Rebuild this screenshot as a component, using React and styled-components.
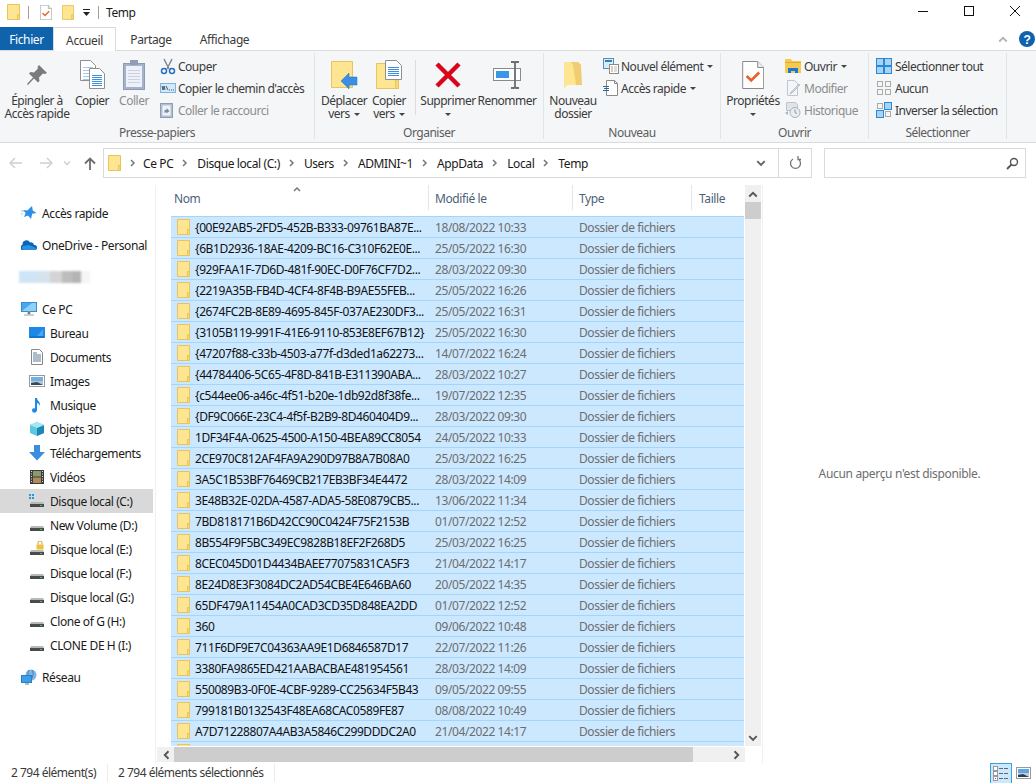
import React from 'react'
import styled, { createGlobalStyle } from 'styled-components'

const GlobalStyle = createGlobalStyle`
  html, body {
    margin: 0;
    padding: 0;
    background: #fff;
    overflow: hidden;
  }
  body, button {
    font-family: "Noto Sans", "Open Sans", "Liberation Sans", sans-serif;
    font-size: 12px;
    letter-spacing: -0.4px;
    color: #1e1e1e;
  }
`

const Window = styled.div`
  width: 1036px;
  height: 783px;
  display: flex;
  flex-direction: column;
  overflow: hidden;
`

/* title bar */
const TitleBar = styled.div`
  height: 27px;
  box-sizing: border-box;
  padding: 0 0 3px 7px;
  display: flex;
  align-items: center;
  flex: none;
`
const TitleSep = styled.div`
  width: 1px;
  height: 13px;
  background: #a0a0a0;
  margin: 0 ${p => p.$right || 8}px 0 ${p => p.$left || 8}px;
`
const TitleText = styled.span`
  color: #1a1a1a;
`
const QuickIcon = styled.span`
  display: flex;
  margin-right: ${p => p.$right || 0}px;
`
const WindowButtons = styled.div`
  margin-left: auto;
  margin-right: -2px;
  display: flex;
  align-self: flex-start;
`
const WindowButton = styled.div`
  width: 46px;
  height: 22px;
  display: flex;
  align-items: center;
  justify-content: center;
`

/* tabs */
const TabBar = styled.div`
  height: 23px;
  display: flex;
  flex: none;
  position: relative;
  border-bottom: 1px solid #dadbdc;
`
const FileTab = styled.div`
  width: 53px;
  height: 23px;
  box-sizing: border-box;
  padding-top: 1px;
  background: #0f62ac;
  color: #fff;
  display: flex;
  align-items: center;
  justify-content: center;
`
const Tab = styled.div`
  width: ${p => p.$w}px;
  height: ${p => (p.$active ? 24 : 23)}px;
  box-sizing: border-box;
  padding-top: 1px;
  display: flex;
  align-items: center;
  justify-content: center;
  color: #3a3a3a;
  background: #fff;
  ${p => p.$active && 'border: 1px solid #dadbdc; border-bottom: none; z-index: 1;'}
`
const TabTools = styled.div`
  margin-left: auto;
  display: flex;
  align-items: center;
  gap: 11px;
  padding-right: 1px;
`

/* ribbon */
const Ribbon = styled.div`
  height: 91px;
  flex: none;
  display: flex;
  background: #f5f6f7;
  border-bottom: 1px solid #dadbdc;
  letter-spacing: -0.5px;
`
const Group = styled.div`
  width: ${p => p.$w}px;
  box-sizing: border-box;
  display: flex;
  flex-direction: column;
  margin: 2px 0 3px;
  padding: 2px 0 0 ${p => p.$pad || 0}px;
  border-right: 1px solid #e2e3e4;
`
const GroupBody = styled.div`
  display: flex;
  flex: none;
  height: 69px;
`
const GroupLabel = styled.div`
  margin-top: 2px;
  margin-left: -${p => p.$pad || 0}px;
  text-align: center;
  color: #5c5c5c;
  line-height: 14px;
`
const LargeButton = styled.div`
  width: ${p => p.$w}px;
  flex: none;
  display: flex;
  flex-direction: column;
  align-items: center;
  color: ${p => (p.$off ? '#8d8d8d' : '#3a3a3a')};
`
const LargeIcon = styled.div`
  height: 39px;
  display: flex;
  align-items: center;
  justify-content: center;
`
const LargeLabel = styled.div`
  line-height: 13px;
  text-align: center;
  white-space: nowrap;
`
const Caret = styled.span`
  display: inline-block;
  width: 0;
  height: 0;
  border-left: 3.5px solid transparent;
  border-right: 3.5px solid transparent;
  border-top: 3.5px solid #444;
  margin-left: ${p => p.$left ?? 4}px;
  vertical-align: 2px;
`
const RibbonSep = styled.div`
  width: 1px;
  height: 55px;
  margin: 5px 4px 0;
  background: #dcdcdc;
`
const SmallColumn = styled.div`
  display: flex;
  flex-direction: column;
  margin-left: ${p => p.$left || 0}px;
`
const SmallButton = styled.div`
  height: 22px;
  display: flex;
  align-items: center;
  gap: ${p => p.$gap ?? 3}px;
  white-space: nowrap;
  color: ${p => (p.$off ? '#8d8d8d' : '#3a3a3a')};
`

/* navigation */
const NavBar = styled.div`
  height: 42px;
  flex: none;
  display: flex;
  align-items: flex-start;
  padding-top: 5px;
  box-sizing: border-box;
`
const NavArrows = styled.div`
  width: 103px;
  height: 30px;
  display: flex;
  align-items: center;
  flex: none;
`
const NavArrow = styled.span`
  display: flex;
  margin-left: ${p => p.$left}px;
`
const AddressBar = styled.div`
  width: 709px;
  height: 30px;
  box-sizing: border-box;
  border: 1px solid #d9d9d9;
  display: flex;
  align-items: center;
  padding-left: 4px;
  color: #1a1a1a;
`
const Crumb = styled.span`
  display: flex;
  align-items: center;
  white-space: nowrap;
`
const CrumbArrow = styled.span`
  display: flex;
  margin: 0 ${p => p.$right ?? 8}px 0 ${p => p.$left ?? 8}px;
`
const AddressEnd = styled.div`
  margin-left: auto;
  display: flex;
  align-items: center;
  height: 100%;
`
const DropZone = styled.div`
  width: 34px;
  display: flex;
  justify-content: center;
`
const RefreshBox = styled.div`
  width: 32px;
  height: 100%;
  border-left: 1px solid #d9d9d9;
  display: flex;
  align-items: center;
  justify-content: center;
`
const SearchBox = styled.div`
  width: 202px;
  height: 30px;
  margin-left: 12px;
  box-sizing: border-box;
  border: 1px solid #d9d9d9;
  display: flex;
  align-items: center;
  justify-content: flex-end;
  padding-right: 6px;
`

/* main */
const Main = styled.div`
  flex: 1;
  min-height: 0;
  display: flex;
`
const Sidebar = styled.div`
  width: 156px;
  flex: none;
  box-sizing: border-box;
  border-right: 1px solid #f0f0f0;
  padding-top: 16px;
`
const NavRow = styled.div`
  width: 153px;
  height: 24px;
  display: flex;
  align-items: center;
  gap: 5px;
  padding-left: ${p => (p.$child ? 29 : 21)}px;
  margin-top: ${p => (p.$gap ? 8 : 0)}px;
  box-sizing: border-box;
  background: ${p => (p.$active ? '#d9d9d9' : 'transparent')};
  white-space: nowrap;
  color: #1a1a1a;
`
const NavIcon = styled.span`
  width: 16px;
  height: 16px;
  flex: none;
  display: flex;
`
const BlurredRow = styled.div`
  height: 24px;
  margin-top: 8px;
  display: flex;
  align-items: center;
  padding-left: 19px;
`
const BlurredName = styled.div`
  width: 71px;
  height: 12px;
  filter: blur(0.8px);
  background: linear-gradient(90deg, #cfe4f6 0 26%, #d6e3ec 26% 44%, #d4d4d4 44% 60%, #bdbdbd 60% 75%, #b4b4b4 75% 88%, #f5f5f5 88%);
`

const ListArea = styled.div`
  width: 607px;
  flex: none;
  box-sizing: border-box;
  padding-left: 1px;
  border-right: 1px solid #f0f0f0;
  display: grid;
  grid-template-columns: 588px 16px;
  grid-template-rows: 561px 16px;
`
const ListPane = styled.div`
  overflow: hidden;
  padding-left: 14px;
`
const Columns = styled.div`
  display: grid;
  grid-template-columns: 258px 144px 119px 52px;
`
const Header = styled(Columns)`
  height: 31px;
`
const HeaderCell = styled.div`
  height: 25px;
  position: relative;
  box-sizing: border-box;
  padding: 2px 0 0 ${p => p.$pad || 6}px;
  display: flex;
  align-items: center;
  color: #4d5f78;
  border-right: ${p => (p.$noLine ? 'none' : '1px solid #e5e5e5')};
`
const SortMark = styled.span`
  position: absolute;
  top: 0;
  left: 122px;
  display: flex;
`
const Row = styled(Columns)`
  width: 573px;
  height: 21px;
  box-sizing: border-box;
  align-items: center;
  background: #cce8ff;
  border-bottom: 1px solid #a3d5fd;
  &:nth-child(2) {
    height: 22px;
    border-top: 1px solid #a3d5fd;
  }
`
const NameCell = styled.div`
  display: flex;
  align-items: center;
  gap: 5px;
  padding-left: 6px;
  white-space: nowrap;
  overflow: hidden;
  color: #111;
`
const InfoCell = styled.div`
  padding-left: 6px;
  white-space: nowrap;
  color: #6d6d6d;
`
const ScrollV = styled.div`
  background: #f0f0f0;
  display: flex;
  flex-direction: column;
`
const ScrollH = styled.div`
  background: #f0f0f0;
  display: flex;
  margin-top: 1px;
`
const ScrollEnd = styled.div`
  height: ${p => (p.$h ? '17px' : 'auto')};
  width: ${p => (p.$h ? 'auto' : '17px')};
  flex: none;
  display: flex;
  align-items: center;
  justify-content: center;
`
const ThumbV = styled.div`
  height: 17px;
  background: #cdcdcd;
`
const ThumbH = styled.div`
  width: 519px;
  background: #cdcdcd;
`
const Spacer = styled.div`
  flex: 1;
`
const Preview = styled.div`
  flex: 1;
  display: flex;
  align-items: center;
  justify-content: center;
  padding-bottom: 1px;
  color: #6d6d6d;
  letter-spacing: -0.33px;
`

/* status */
const StatusBar = styled.div`
  height: 20px;
  flex: none;
  display: flex;
  align-items: center;
  color: #3a3a3a;
  letter-spacing: -0.5px;
`
const StatusItem = styled.div`
  width: ${p => p.$w}px;
  box-sizing: border-box;
  padding-left: ${p => p.$pad}px;
  white-space: nowrap;
  border-right: 1px solid #ececec;
  line-height: 18px;
`
const ViewButtons = styled.div`
  margin-left: auto;
  margin-right: 2px;
  display: flex;
  align-items: center;
  height: 100%;
`
const ViewButton = styled.div`
  width: 22px;
  height: 20px;
  box-sizing: border-box;
  display: flex;
  align-items: center;
  justify-content: center;
  ${p => p.$active && 'background: #cce8ff; border: 1px solid #3aa0da; border-bottom: none;'}
`

/* drawings */
const Folder = ({ w = 13, h = 16 }) => (
  <svg width={w} height={h} viewBox="0 0 13 16">
    <path d="M.5.5h12v15H.5z" fill="#fde592" stroke="#e8c45c" />
    <path d="M10.5 10.5h2v5h-2z" fill="#fbd873" stroke="#e8c45c" />
  </svg>
)
const Chevron = ({ dir = 'right', c = '#777', s = 8 }) => {
  const d = { right: 'M2 1l3 3-3 3', left: 'M6 1L3 4l3 3', up: 'M1 6l3-3 3 3', down: 'M1 2.5l3 3 3-3' }[dir]
  return (
    <svg width={s} height={s} viewBox="0 0 8 8">
      <path d={d} fill="none" stroke={c} strokeWidth="1.5" />
    </svg>
  )
}
const PropsIcon = ({ s = 14 }) => (
  <svg width={s * 0.8} height={s} viewBox="0 0 22 28">
    <path d="M.5.5h15l6 6v21H.5z" fill="#fff" stroke="#8a8a8a" />
    <path d="M15.5.5v6h6" fill="#eee" stroke="#8a8a8a" />
    <path d="M4.5 15l4.5 4.5 8-8" fill="none" stroke="#e8622a" strokeWidth="2.6" />
  </svg>
)
const PinIcon = () => (
  <svg width="22" height="22" viewBox="0 0 22 22">
    <path d="M13 1l8 8-2 1-2-.5-4 4 .5 3.5-1.5 1.5-4-4L2 21l-1-1 6-6.500-4-4L4.500 8 8 8.500l4-4L11.500 3z" fill="#7b7b7b" />
  </svg>
)
const Doc = ({ x, y, w, h, lines, dense }) => (
  <g>
    <path d={`M${x + .5} ${y + .5}h${w - 6}l5 5v${h - 6}h-${w - 1}z`} fill="#fff" stroke="#8f8f8f" />
    {Array.from({ length: lines }).map((_, i) => (
      <path key={i} d={`M${x + 3} ${y + 7.5 + i * (dense ? 2 : 3)}h${w - 6}`} stroke={dense ? '#3f8fe0' : '#a5c8ea'} />
    ))}
  </g>
)
const CopyIcon = () => (
  <svg width="25" height="29" viewBox="0 0 25 29">
    <Doc x={0} y={0} w={16} h={21} lines={5} />
    <Doc x={9} y={8} w={16} h={21} lines={6} dense />
  </svg>
)
const ClipboardIcon = () => (
  <svg width="22" height="30" viewBox="0 0 22 30">
    <rect x=".5" y="3.500" width="21" height="26" fill="#a3b3cb" stroke="#8b9bb3" />
    <rect x="3" y="6" width="16" height="21" fill="#eef1f8" />
    <path d="M5 10.500h12M5 13.500h12M5 16.500h12M5 19.500h12M5 22.500h12" stroke="#c9d2e3" />
    <rect x="7" y="0" width="8" height="5" fill="#8f9db3" />
  </svg>
)
const ScissorsIcon = () => (
  <svg width="16" height="17" viewBox="0 0 16 17">
    <path d="M4 1l5 10M12 1L7 11" stroke="#7f8a96" strokeWidth="1.5" />
    <circle cx="4" cy="13" r="2.500" fill="none" stroke="#2a6fc0" strokeWidth="1.5" />
    <circle cx="12" cy="13" r="2.500" fill="none" stroke="#2a6fc0" strokeWidth="1.5" />
  </svg>
)
const PathIcon = () => (
  <svg width="16" height="10" viewBox="0 0 16 10">
    <rect x=".5" y=".5" width="15" height="9" fill="#d4e8f8" stroke="#7fb3dc" />
    <path d="M2 3l1 4 1-4 1 4M6 3l2 4M9 7h1M11 7h1M13 7h1" stroke="#3a5a78" fill="none" />
  </svg>
)
const ShortcutIcon = () => (
  <svg width="13" height="16" viewBox="0 0 13 16">
    <rect x=".5" y="1.500" width="12" height="14" fill="#b3c0d3" stroke="#8e9db2" />
    <rect x="2.500" y="3.500" width="8" height="10" fill="#f0f2f7" />
    <path d="M4.500 11V8h2V6l3 3-3 2.500V10" fill="#7b8aa0" />
  </svg>
)
const MoveIcon = () => (
  <svg width="27" height="30" viewBox="0 0 27 30">
    <path d="M.5 1.500h21v26H.5z" fill="#fde592" stroke="#e8c45c" />
    <path d="M18.500 18.500h3v9h-3z" fill="#fbd873" stroke="#e8c45c" />
    <path d="M10 21l8-8v4h8v8h-8v4z" fill="#3a8ee6" stroke="#2a72c0" strokeWidth=".5" />
  </svg>
)
const CopyToIcon = () => (
  <svg width="27" height="30" viewBox="0 0 27 30">
    <path d="M.5 3.500h22v25H.5z" fill="#fde592" stroke="#e8c45c" />
    <path d="M19.500 20h3v8.500h-3z" fill="#fbd873" stroke="#e8c45c" />
    <Doc x={9} y={0} w={17} h={20} lines={5} dense />
  </svg>
)
const DeleteIcon = () => (
  <svg width="26" height="26" viewBox="0 0 26 26">
    <path d="M2 2l22 22M24 2L2 24" stroke="#d8051b" strokeWidth="4.500" />
  </svg>
)
const RenameIcon = () => (
  <svg width="29" height="28" viewBox="0 0 29 28">
    <rect x=".5" y="7.500" width="27" height="12" fill="#fff" stroke="#8a8a8a" />
    <rect x="3" y="10" width="13" height="7" fill="#3a96e6" />
    <path d="M18 1h3l1 1 1-1h3M22 2v24M18 27h3l1-1 1 1h3" fill="none" stroke="#6d6d6d" strokeWidth="1.800" />
  </svg>
)
const NewFolderIcon = () => (
  <svg width="20" height="28" viewBox="0 0 20 28">
    <path d="M1 1h14l3 3v20H4L1 27z" fill="#fbdc86" />
    <path d="M8 1h7l3 3 1 20H9z" fill="#f0cd72" />
    <path d="M1 1h7l2 3 3 20H4L1 27z" fill="#fde592" />
  </svg>
)
const NewItemIcon = () => (
  <svg width="16" height="16" viewBox="0 0 16 16">
    <rect x=".5" y=".5" width="10" height="10" fill="#d8ecfa" stroke="#5a8fb5" />
    <path d="M2 3h7" stroke="#2f7fc0" strokeWidth="2" />
    <rect x="6.500" y="6.500" width="9" height="9" fill="#fff" stroke="#8a8a8a" />
    <path d="M8 9h2M8 11h2M8 13h2" stroke="#e08a4a" />
    <path d="M11 9h3M11 11h3M11 13h3" stroke="#bbb" />
  </svg>
)
const EasyAccessIcon = () => (
  <svg width="15" height="16" viewBox="0 0 15 16">
    <path d="M3.500.5h8l3 3v12h-11z" fill="#fff" stroke="#8a8a8a" />
    <path d="M11.500.5v3h3" fill="none" stroke="#8a8a8a" />
    <path d="M0 6.500h6M1 8.500h5M0 10.500h6" stroke="#2a6a9a" />
  </svg>
)
const OpenIcon = () => (
  <svg width="16" height="16" viewBox="0 0 16 16">
    <path d="M0 1h6l1 2h9v12H0z" fill="#f6c94f" />
    <path d="M0 4h16v1H0z" fill="#e6a92e" />
    <path d="M3 15v-5h10v5h-3v-2H6v2z" fill="#1a78d8" />
  </svg>
)
const EditIcon = () => (
  <svg width="16" height="16" viewBox="0 0 16 16">
    <path d="M2.500.5h7l3 3v12h-10z" fill="#f4f6f9" stroke="#c0c6d0" />
    <path d="M6 12l-1 2 2-1 8-8-1-1z" fill="#d0dae6" stroke="#a8b4c2" strokeWidth=".7" />
  </svg>
)
const HistoryIcon = () => (
  <svg width="16" height="16" viewBox="0 0 16 16">
    <path d="M1.500.5h9l2 2v6h-11z" fill="#dfe3ea" stroke="#bcc3cf" />
    <circle cx="10" cy="10.500" r="5" fill="#e9ecf1" stroke="#a9b0bb" />
    <path d="M10 7.500v3l2 1" fill="none" stroke="#8d96a3" />
    <path d="M0 11l3-2v4z" fill="#a9b5c5" />
  </svg>
)
const Quad = ({ on = [] }) => (
  <svg width="16" height="16" viewBox="0 0 16 16">
    {[[0, 0], [8, 0], [0, 8], [8, 8]].map(([x, y], i) => (
      <rect
        key={i}
        x={x + (on[i] ? .5 : 1.5)}
        y={y + (on[i] ? .5 : 1.5)}
        width={on[i] ? 7 : 5}
        height={on[i] ? 7 : 5}
        fill={on[i] ? '#a8d3f3' : 'none'}
        stroke={on[i] ? '#2b88d8' : '#aaa'}
      />
    ))}
  </svg>
)
const Star = () => (
  <svg width="16" height="16" viewBox="0 0 16 16">
    <path d="M11 1l.8 4.500L15.500 8l-4.300.8L10 14l-3-3.500L3 12l1.700-4L2 5l4.300.4z" fill="#2f8fe6" />
    <path d="M0 6h3M0 9h2" stroke="#9cc8ee" />
  </svg>
)
const Cloud = () => (
  <svg width="16" height="16" viewBox="0 0 16 16">
    <path d="M2 13a2.500 2.500 0 0 1-.5-5A4 4 0 0 1 9 5.500 3 3 0 0 1 13 8a2.500 2.500 0 0 1 1 5z" fill="#0a64b8" />
    <path d="M1 11.500a2 2 0 0 1 1-2.500l6-1 7 3a2 2 0 0 1-1 2H2z" fill="#2c90e0" />
  </svg>
)
const Monitor = () => (
  <svg width="16" height="16" viewBox="0 0 16 16">
    <rect x=".5" y="1.500" width="15" height="9" fill="#48a8ee" stroke="#3a8ecc" />
    <path d="M1 10l10-8h4v8z" fill="#8fd0f6" />
    <path d="M7 11h2v2H7zM3 14h10" stroke="#9aa3ad" />
  </svg>
)
const Desktop = () => (
  <svg width="16" height="16" viewBox="0 0 16 16">
    <rect x="0" y="2" width="16" height="11" fill="#1d88e8" />
    <path d="M1 12h14" stroke="#0f62ac" />
    <path d="M8 11l6-7v7z" fill="#4aa6f0" />
  </svg>
)
const DocsIcon = () => (
  <svg width="16" height="16" viewBox="0 0 16 16">
    <path d="M2.500.5h8l3 3v12h-11z" fill="#fff" stroke="#888" />
    <path d="M4 4h4M4 6h8M4 8h8M4 10h8M4 12h8" stroke="#5a7a96" />
  </svg>
)
const ImagesIcon = () => (
  <svg width="16" height="16" viewBox="0 0 16 16">
    <rect x=".5" y="2.500" width="15" height="11" fill="#fff" stroke="#999" />
    <rect x="2" y="4" width="12" height="4" fill="#6fb0e6" />
    <rect x="2" y="8" width="12" height="4" fill="#b8c4cc" />
    <path d="M2 10l6-1 6 3H2z" fill="#334a5c" />
  </svg>
)
const MusicIcon = () => (
  <svg width="16" height="16" viewBox="0 0 16 16">
    <path d="M6 1h2c0 3 4 4 3 8-.5-2-2-3-3-3v7c0 2-2 3-3.500 2.500S2.500 12 4 11.500c.8-.3 1.500-.2 2 .2z" fill="#1d88e8" />
  </svg>
)
const CubeIcon = () => (
  <svg width="16" height="16" viewBox="0 0 16 16">
    <path d="M8 1l7 3v8l-7 3-7-3V4z" fill="#5cc8e0" />
    <path d="M8 7l7-3v8l-7 3z" fill="#1d88b8" />
    <path d="M1 4l7-3 7 3-7 3z" fill="#a6e6f0" />
  </svg>
)
const DownIcon = () => (
  <svg width="16" height="16" viewBox="0 0 16 16">
    <path d="M5 0h6v7h5l-8 8.500L0 7h5z" fill="#3a8ee0" />
  </svg>
)
const VideoIcon = () => (
  <svg width="16" height="16" viewBox="0 0 16 16">
    <rect x="1" y="1" width="14" height="14" fill="#3c3c3c" />
    <path d="M2 2.500h1M2 5h1M2 7.500h1M2 10h1M2 12.500h1M13 2.500h1M13 5h1M13 7.500h1M13 10h1M13 12.500h1" stroke="#ddd" />
    <rect x="4" y="2" width="8" height="5.500" fill="#8a9a6a" />
    <rect x="4" y="8.500" width="8" height="5.500" fill="#b08a5a" />
  </svg>
)
const Drive = ({ lock, win }) => (
  <svg width="16" height="16" viewBox="0 0 16 16">
    {win && <path d="M0 1h2v2H0zM3 1h2v2H3zM0 4h2v2H0zM3 4h2v2H3z" fill="#1d9ae8" />}
    <path d="M2 9h12l1 2H1z" fill="#b8b8b8" />
    <rect x="1" y="11" width="14" height="3" fill="#4a4a4a" />
    <rect x="11" y="12" width="2" height="1" fill="#3ad04a" />
    {lock && (
      <g>
        <rect x="7.500" y="3.500" width="7" height="5" fill="#f0c040" />
        <path d="M9 3.500V2a2 2 0 0 1 4 0v1.500" fill="none" stroke="#c9a030" />
      </g>
    )}
  </svg>
)
const NetIcon = () => (
  <svg width="16" height="16" viewBox="0 0 16 16">
    <circle cx="10" cy="6" r="5.500" fill="#7fb6e6" />
    <path d="M8 1c-2 3-1 6 2 9M11 1c2 3 1 6-1 10" stroke="#4a7fb0" fill="none" />
    <rect x=".5" y="6.500" width="10" height="7" fill="#3aa0ee" stroke="#2a80c0" />
    <path d="M4 15h4" stroke="#777" />
  </svg>
)
const DetailsViewIcon = () => (
  <svg width="16" height="16" viewBox="0 0 16 16">
    <rect x=".5" y=".5" width="4" height="4" fill="#fff" stroke="#999" />
    <rect x=".5" y="5.500" width="4" height="4" fill="#fff" stroke="#999" />
    <rect x=".5" y="10.500" width="4" height="4" fill="#fff" stroke="#999" />
    <rect x="2" y="12" width="1" height="1" fill="#d0302a" />
    <path d="M6 2.500h4M11 2.500h4M6 7.500h4M11 7.500h4M6 12.500h4M11 12.500h4" stroke="#666" />
  </svg>
)
const ThumbViewIcon = () => (
  <svg width="15" height="12" viewBox="0 0 15 12">
    <rect x=".5" y=".5" width="14" height="11" fill="#fff" stroke="#999" />
    <rect x="2" y="2" width="11" height="4" fill="#5ea6ea" />
    <rect x="2" y="6" width="11" height="4" fill="#c4ccd4" />
    <path d="M2 8l5-1 6 3H2z" fill="#2c3e50" />
  </svg>
)

const ROWS = [
  ['{00E92AB5-2FD5-452B-B333-09761BA87E...', '18/08/2022 10:33'],
  ['{6B1D2936-18AE-4209-BC16-C310F62E0E...', '25/05/2022 16:30'],
  ['{929FAA1F-7D6D-481f-90EC-D0F76CF7D2...', '28/03/2022 09:30'],
  ['{2219A35B-FB4D-4CF4-8F4B-B9AE55FEB...', '25/05/2022 16:26'],
  ['{2674FC2B-8E89-4695-845F-037AE230DF3...', '25/05/2022 16:31'],
  ['{3105B119-991F-41E6-9110-853E8EF67B12}', '25/05/2022 16:30'],
  ['{47207f88-c33b-4503-a77f-d3ded1a62273...', '14/07/2022 16:24'],
  ['{44784406-5C65-4F8D-841B-E311390ABA...', '28/03/2022 10:27'],
  ['{c544ee06-a46c-4f51-b20e-1db92d8f38fe...', '19/07/2022 12:35'],
  ['{DF9C066E-23C4-4f5f-B2B9-8D460404D9...', '28/03/2022 09:30'],
  ['1DF34F4A-0625-4500-A150-4BEA89CC8054', '24/05/2022 10:33'],
  ['2CE970C812AF4FA9A290D97B8A7B08A0', '25/03/2022 16:25'],
  ['3A5C1B53BF76469CB217EB3BF34E4472', '28/03/2022 14:09'],
  ['3E48B32E-02DA-4587-ADA5-58E0879CB5...', '13/06/2022 11:34'],
  ['7BD818171B6D42CC90C0424F75F2153B', '01/07/2022 12:52'],
  ['8B554F9F5BC349EC9828B18EF2F268D5', '25/03/2022 16:25'],
  ['8CEC045D01D4434BAEE77075831CA5F3', '21/04/2022 14:17'],
  ['8E24D8E3F3084DC2AD54CBE4E646BA60', '20/05/2022 14:35'],
  ['65DF479A11454A0CAD3CD35D848EA2DD', '01/07/2022 12:52'],
  ['360', '09/06/2022 10:48'],
  ['711F6DF9E7C04363AA9E1D6846587D17', '22/07/2022 11:26'],
  ['3380FA9865ED421AABACBAE481954561', '28/03/2022 14:09'],
  ['550089B3-0F0E-4CBF-9289-CC25634F5B43', '09/05/2022 09:55'],
  ['799181B0132543F48EA68CAC0589FE87', '08/08/2022 10:49'],
  ['A7D71228807A4AB3A5846C299DDDC2A0', '21/04/2022 14:17'],
  ['', ''],
]

const PLACES = [
  ['Bureau', <Desktop />],
  ['Documents', <DocsIcon />],
  ['Images', <ImagesIcon />],
  ['Musique', <MusicIcon />],
  ['Objets 3D', <CubeIcon />],
  ['Téléchargements', <DownIcon />],
  ['Vidéos', <VideoIcon />],
  ['Disque local (C:)', <Drive win />, true],
  ['New Volume (D:)', <Drive />],
  ['Disque local (E:)', <Drive lock />],
  ['Disque local (F:)', <Drive />],
  ['Disque local (G:)', <Drive />],
  ['Clone of G (H:)', <Drive />],
  ['CLONE DE H (I:)', <Drive />],
]

const CRUMBS = ['Ce PC', 'Disque local (C:)', 'Users', 'ADMINI~1', 'AppData', 'Local', 'Temp']

export default function App () {
  return (
    <Window>
      <GlobalStyle />
      <TitleBar>
        <QuickIcon><Folder w={13} h={16} /></QuickIcon>
        <TitleSep $left={8} $right={11} />
        <QuickIcon $right={10}><PropsIcon s={15} /></QuickIcon>
        <QuickIcon $right={9}><Folder w={12} h={15} /></QuickIcon>
        <QuickIcon>
          <svg width="7" height="7" viewBox="0 0 7 7"><path d="M0 0h7v1H0zM0 3h7L3.500 7z" fill="#222" /></svg>
        </QuickIcon>
        <TitleSep $left={8} $right={7} />
        <TitleText>Temp</TitleText>
        <WindowButtons>
          <WindowButton>
            <svg width="10" height="10" viewBox="0 0 10 10"><path d="M0 5.500h10" stroke="#111" /></svg>
          </WindowButton>
          <WindowButton>
            <svg width="10" height="10" viewBox="0 0 10 10"><rect x=".5" y=".5" width="9" height="9" fill="none" stroke="#111" /></svg>
          </WindowButton>
          <WindowButton>
            <svg width="10" height="10" viewBox="0 0 10 10"><path d="M0 0l10 10M10 0L0 10" stroke="#111" /></svg>
          </WindowButton>
        </WindowButtons>
      </TitleBar>

      <TabBar>
        <FileTab>Fichier</FileTab>
        <Tab $w={63} $active>Accueil</Tab>
        <Tab $w={70}>Partage</Tab>
        <Tab $w={77}>Affichage</Tab>
        <TabTools>
          <Chevron dir="up" c="#b5b5b5" s={10} />
          <svg width="16" height="16" viewBox="0 0 16 16">
            <circle cx="8" cy="8" r="8" fill="#0f62ac" />
            <text x="8" y="12.500" textAnchor="middle" fontSize="12" fontWeight="700" fontFamily="Liberation Sans" fill="#fff">?</text>
          </svg>
        </TabTools>
      </TabBar>

      <Ribbon>
        <Group $w={315} $pad={3}>
          <GroupBody>
            <LargeButton $w={68}>
              <LargeIcon><PinIcon /></LargeIcon>
              <LargeLabel>Épingler à<br />Accès rapide</LargeLabel>
            </LargeButton>
            <LargeButton $w={42}>
              <LargeIcon><CopyIcon /></LargeIcon>
              <LargeLabel>Copier</LargeLabel>
            </LargeButton>
            <LargeButton $w={42} $off>
              <LargeIcon><ClipboardIcon /></LargeIcon>
              <LargeLabel>Coller</LargeLabel>
            </LargeButton>
            <SmallColumn $left={5}>
              <SmallButton $gap={2}><ScissorsIcon /> Couper</SmallButton>
              <SmallButton $gap={2}><PathIcon /> Copier le chemin d'accès</SmallButton>
              <SmallButton $off $gap={5}><ShortcutIcon /> Coller le raccourci</SmallButton>
            </SmallColumn>
          </GroupBody>
          <GroupLabel $pad={3}>Presse-papiers</GroupLabel>
        </Group>

        <Group $w={229} $pad={6}>
          <GroupBody>
            <LargeButton $w={46}>
              <LargeIcon><MoveIcon /></LargeIcon>
              <LargeLabel>Déplacer<br />vers<Caret /></LargeLabel>
            </LargeButton>
            <LargeButton $w={44}>
              <LargeIcon><CopyToIcon /></LargeIcon>
              <LargeLabel>Copier<br />vers<Caret /></LargeLabel>
            </LargeButton>
            <RibbonSep />
            <LargeButton $w={56}>
              <LargeIcon><DeleteIcon /></LargeIcon>
              <LargeLabel>Supprimer<br /><Caret $left={0} /></LargeLabel>
            </LargeButton>
            <LargeButton $w={62}>
              <LargeIcon><RenameIcon /></LargeIcon>
              <LargeLabel>Renommer</LargeLabel>
            </LargeButton>
          </GroupBody>
          <GroupLabel $pad={6}>Organiser</GroupLabel>
        </Group>

        <Group $w={177} $pad={4}>
          <GroupBody>
            <LargeButton $w={50}>
              <LargeIcon><NewFolderIcon /></LargeIcon>
              <LargeLabel>Nouveau<br />dossier</LargeLabel>
            </LargeButton>
            <SmallColumn $left={5}>
              <SmallButton $gap={2}><NewItemIcon /> Nouvel élément<Caret $left={2} /></SmallButton>
              <SmallButton><EasyAccessIcon /> Accès rapide<Caret $left={1} /></SmallButton>
            </SmallColumn>
          </GroupBody>
          <GroupLabel $pad={4}>Nouveau</GroupLabel>
        </Group>

        <Group $w={148} $pad={4}>
          <GroupBody>
            <LargeButton $w={56}>
              <LargeIcon><PropsIcon s={28} /></LargeIcon>
              <LargeLabel>Propriétés<br /><Caret $left={0} /></LargeLabel>
            </LargeButton>
            <SmallColumn $left={4}>
              <SmallButton><OpenIcon /> Ouvrir<Caret $left={1} /></SmallButton>
              <SmallButton $off><EditIcon /> Modifier</SmallButton>
              <SmallButton $off><HistoryIcon /> Historique</SmallButton>
            </SmallColumn>
          </GroupBody>
          <GroupLabel $pad={4}>Ouvrir</GroupLabel>
        </Group>

        <Group $w={138} $pad={7}>
          <GroupBody>
            <SmallColumn>
              <SmallButton><Quad on={[1, 1, 1, 1]} /> Sélectionner tout</SmallButton>
              <SmallButton><Quad /> Aucun</SmallButton>
              <SmallButton><Quad on={[0, 1, 1, 0]} /> Inverser la sélection</SmallButton>
            </SmallColumn>
          </GroupBody>
          <GroupLabel $pad={7}>Sélectionner</GroupLabel>
        </Group>
      </Ribbon>

      <NavBar>
        <NavArrows>
          <NavArrow $left={9}>
            <svg width="13" height="12" viewBox="0 0 13 12"><path d="M6 1L1 6l5 5M1 6h12" fill="none" stroke="#d0d0d0" strokeWidth="1.500" /></svg>
          </NavArrow>
          <NavArrow $left={18}>
            <svg width="13" height="12" viewBox="0 0 13 12"><path d="M7 1l5 5-5 5M12 6H0" fill="none" stroke="#d0d0d0" strokeWidth="1.500" /></svg>
          </NavArrow>
          <NavArrow $left={10}><Chevron dir="down" c="#d0d0d0" /></NavArrow>
          <NavArrow $left={13}>
            <svg width="12" height="13" viewBox="0 0 12 13"><path d="M1 6.500l5-5 5 5M6 1.500V13" fill="none" stroke="#6d6d6d" strokeWidth="1.800" /></svg>
          </NavArrow>
        </NavArrows>
        <AddressBar>
          <Folder />
          <CrumbArrow $left={8} $right={6}><Chevron /></CrumbArrow>
          {CRUMBS.map((c, i) => (
            <Crumb key={c}>
              {c}
              {i < CRUMBS.length - 1 && <CrumbArrow><Chevron /></CrumbArrow>}
            </Crumb>
          ))}
          <AddressEnd>
            <DropZone><Chevron dir="down" c="#666" s={10} /></DropZone>
            <RefreshBox>
              <svg width="13" height="14" viewBox="0 0 13 14">
                <path d="M4 3a5 5 0 1 0 5 0M9 0v3.500h3" fill="none" stroke="#777" strokeWidth="1.300" />
              </svg>
            </RefreshBox>
          </AddressEnd>
        </AddressBar>
        <SearchBox>
          <svg width="13" height="13" viewBox="0 0 13 13">
            <circle cx="8" cy="5" r="3.500" fill="none" stroke="#555" strokeWidth="1.400" />
            <path d="M5.500 7.500L1 12" stroke="#555" strokeWidth="1.800" />
          </svg>
        </SearchBox>
      </NavBar>

      <Main>
        <Sidebar>
          <NavRow><NavIcon><Star /></NavIcon>Accès rapide</NavRow>
          <NavRow $gap><NavIcon><Cloud /></NavIcon>OneDrive - Personal</NavRow>
          <BlurredRow><BlurredName /></BlurredRow>
          <NavRow $gap><NavIcon><Monitor /></NavIcon>Ce PC</NavRow>
          {PLACES.map(([label, icon, active]) => (
            <NavRow key={label} $child $active={active}><NavIcon>{icon}</NavIcon>{label}</NavRow>
          ))}
          <NavRow $gap><NavIcon><NetIcon /></NavIcon>Réseau</NavRow>
        </Sidebar>

        <ListArea>
          <ListPane>
            <Header>
              <HeaderCell $pad={3}>
                Nom
                <SortMark><Chevron dir="up" c="#777" /></SortMark>
              </HeaderCell>
              <HeaderCell>Modifié le</HeaderCell>
              <HeaderCell>Type</HeaderCell>
              <HeaderCell $noLine $pad={7}>Taille</HeaderCell>
            </Header>
            {ROWS.map(([name, date], i) => (
              <Row key={i}>
                <NameCell><Folder />{name}</NameCell>
                <InfoCell>{date}</InfoCell>
                <InfoCell>{name && 'Dossier de fichiers'}</InfoCell>
              </Row>
            ))}
          </ListPane>
          <ScrollV>
            <ScrollEnd $h><Chevron dir="up" c="#555" s={10} /></ScrollEnd>
            <ThumbV />
            <Spacer />
            <ScrollEnd $h><Chevron dir="down" c="#555" s={10} /></ScrollEnd>
          </ScrollV>
          <ScrollH>
            <ScrollEnd><Chevron dir="left" c="#555" s={10} /></ScrollEnd>
            <ThumbH />
            <Spacer />
            <ScrollEnd><Chevron c="#555" s={10} /></ScrollEnd>
          </ScrollH>
        </ListArea>

        <Preview>Aucun aperçu n'est disponible.</Preview>
      </Main>

      <StatusBar>
        <StatusItem $w={108} $pad={11}>2 794 élément(s)</StatusItem>
        <StatusItem $w={167} $pad={10}>2 794 éléments sélectionnés</StatusItem>
        <ViewButtons>
          <ViewButton $active><DetailsViewIcon /></ViewButton>
          <ViewButton><ThumbViewIcon /></ViewButton>
        </ViewButtons>
      </StatusBar>
    </Window>
  )
}
